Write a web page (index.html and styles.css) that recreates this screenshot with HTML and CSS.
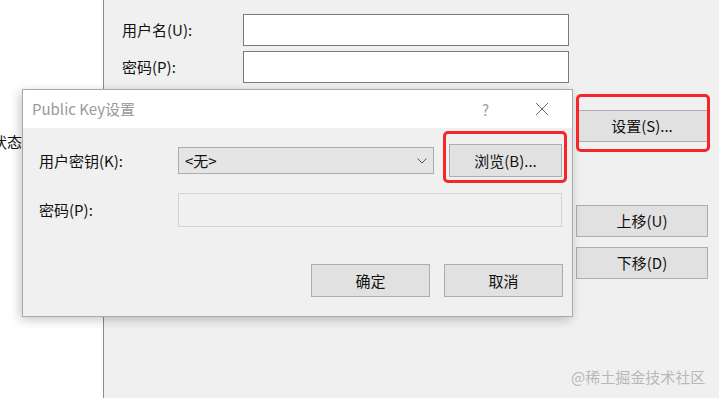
FILE: index.html
```html
<!DOCTYPE html>
<html lang="zh-CN">
<head>
<meta charset="utf-8">
<title>Public Key设置</title>
<link rel="stylesheet" href="styles.css">
</head>
<body>
  <div class="side">
    <span class="status">状态</span>
  </div>
  <div class="main">
    <div class="fields">
      <div class="row"><span class="lbl">用户名(U):</span><span class="input"></span></div>
      <div class="row"><span class="lbl">密码(P):</span><span class="input"></span></div>
    </div>
    <div class="btncol">
      <div class="btn wide">设置(S)...</div>
      <div class="btn wide gap-top">上移(U)</div>
      <div class="btn wide">下移(D)</div>
    </div>
  </div>

  <div class="dialog">
    <div class="titlebar">
      <span class="title">Public Key设置</span>
      <span class="help">?</span>
      <svg class="close" width="14" height="14" viewBox="0 0 14 14"><path d="M1 1 L13 13 M13 1 L1 13" stroke="#6e6e6e" stroke-width="1" fill="none"/></svg>
    </div>
    <div class="dbody">
      <div class="drow">
        <span class="dlbl">用户密钥(K):</span>
        <div class="combo"><span>&lt;无&gt;</span>
          <svg class="chev" width="10" height="6" viewBox="0 0 10 6"><path d="M0.5 0.5 L5 5 L9.5 0.5" stroke="#555" stroke-width="1" fill="none"/></svg>
        </div>
        <div class="btn browse">浏览(B)...</div>
      </div>
      <div class="drow r2">
        <span class="dlbl">密码(P):</span>
        <div class="pwd"></div>
      </div>
      <div class="actions">
        <div class="btn act">确定</div>
        <div class="btn act">取消</div>
      </div>
    </div>
  </div>

  <div class="mark m1"></div>
  <div class="mark m2"></div>
  <div class="watermark">@稀土掘金技术社区</div>
</body>
</html>
```
FILE: styles.css
```css
html, body {
  margin: 0;
  padding: 0;
}
body {
  width: 719px;
  height: 398px;
  overflow: hidden;
  position: relative;
  display: flex;
  font-family: "Noto Sans CJK SC", "Noto Sans", sans-serif;
  font-size: 15px;
  color: #111;
  background: #f0f0f0;
}
.side {
  width: 103px;
  background: #fff;
  border-right: 1px solid #8c8c8c;
  flex: none;
  overflow: hidden;
}
.status {
  display: block;
  margin-top: 132px;
  margin-left: -8px;
  line-height: 20px;
  white-space: nowrap;
}
.main {
  flex: 1;
  background: #f0f0f0;
  padding: 14px 0 0 18px;
  display: flex;
  flex-direction: column;
}
.fields {
  display: flex;
  flex-direction: column;
  gap: 5px;
}
.row {
  display: flex;
  align-items: center;
  height: 32px;
}
.lbl {
  width: 121px;
  line-height: 20px;
}
.input {
  width: 326px;
  height: 32px;
  box-sizing: border-box;
  background: #fff;
  border: 1px solid #7a7a7a;
}
.btncol {
  margin-top: 27px;
  margin-left: 454px;
  display: flex;
  flex-direction: column;
  gap: 10px;
}
.btn {
  box-sizing: border-box;
  background: #e1e1e1;
  border: 1px solid #adadad;
  display: flex;
  align-items: center;
  justify-content: center;
  color: #111;
  line-height: 20px;
}
.wide {
  width: 132px;
  height: 32px;
}
.gap-top {
  margin-top: 53px;
}

/* dialog */
.dialog {
  position: absolute;
  left: 22px;
  top: 89px;
  width: 551px;
  height: 228px;
  box-sizing: border-box;
  border: 1px solid #a9a9a9;
  background: #f0f0f0;
  box-shadow: -2px 3px 10px rgba(0,0,0,0.22);
  display: flex;
  flex-direction: column;
}
.titlebar {
  height: 38px;
  background: #fff;
  display: flex;
  align-items: center;
  padding-left: 9px;
  flex: none;
}
.title {
  color: #9a9a9a;
  flex: 1;
  line-height: 20px;
}
.help {
  color: #a0a0a0;
  width: 20px;
  font-size: 15px;
  margin-right: 33px;
}
.close {
  margin-right: 23px;
}
.dbody {
  padding: 16px 9px 0 16px;
  display: flex;
  flex-direction: column;
}
.drow {
  display: flex;
  align-items: center;
}
.dlbl {
  width: 139px;
  line-height: 20px;
}
.combo {
  width: 256px;
  height: 27px;
  box-sizing: border-box;
  background: #e5e5e5;
  border: 1px solid #acacac;
  display: flex;
  align-items: center;
  justify-content: space-between;
  padding: 0 6px 0 6px;
  margin-right: 15px;
}
.browse {
  width: 113px;
  height: 33px;
}
.r2 {
  margin-top: 16px;
}
.pwd {
  width: 384px;
  height: 34px;
  box-sizing: border-box;
  border: 1px solid #d3d3d3;
  background: #f0f0f0;
}
.actions {
  margin-top: 37px;
  display: flex;
  justify-content: flex-end;
  gap: 14px;
}
.act {
  width: 119px;
  height: 33px;
}

/* annotations */
.mark {
  position: absolute;
  border: 3px solid #f5262a;
  border-radius: 5px;
  box-sizing: border-box;
}
.m1 {
  left: 576px;
  top: 94px;
  width: 134px;
  height: 58px;
}
.m2 {
  left: 443px;
  top: 131px;
  width: 124px;
  height: 52px;
}
.watermark {
  position: absolute;
  left: 571px;
  top: 366px;
  color: #b8b8b8;
  font-size: 15px;
  line-height: 22px;
  white-space: nowrap;
}
```
